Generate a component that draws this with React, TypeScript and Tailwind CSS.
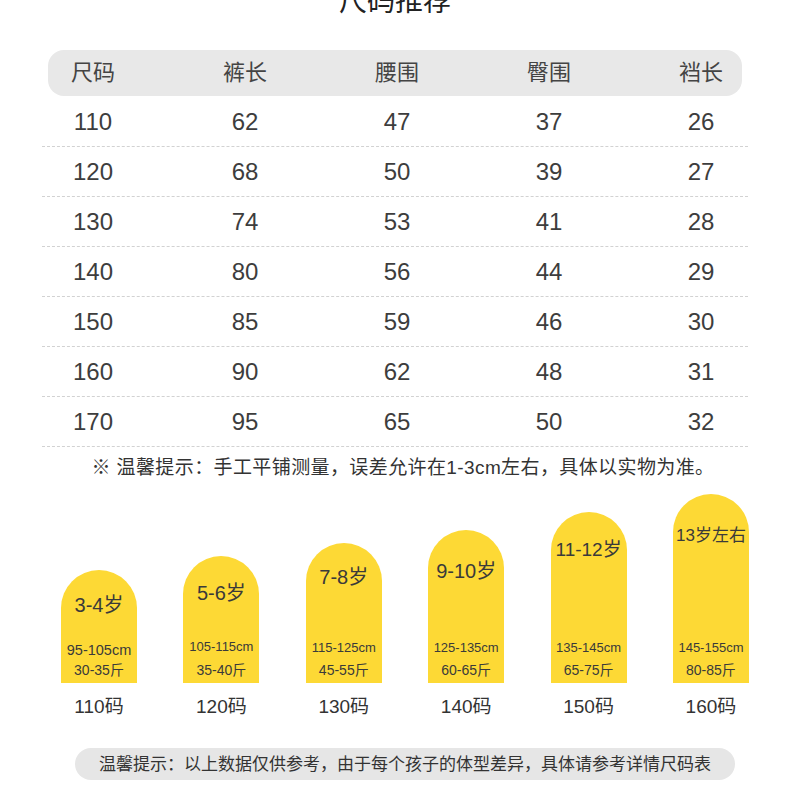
const FONT = "font-['Liberation_Sans','Noto_Sans_CJK_SC',sans-serif]";

const headers = ['尺码', '裤长', '腰围', '臀围', '裆长'];

const rows = [
  ['110', '62', '47', '37', '26'],
  ['120', '68', '50', '39', '27'],
  ['130', '74', '53', '41', '28'],
  ['140', '80', '56', '44', '29'],
  ['150', '85', '59', '46', '30'],
  ['160', '90', '62', '48', '31'],
  ['170', '95', '65', '50', '32'],
];

const cards = [
  { age: '3-4岁', cm: '95-105cm', jin: '30-35斤', size: '110码', box: 'h-[120px]', top: 'pt-[23px]', ageText: 'text-[20px]', cmText: 'text-[14.5px] leading-[18px]' },
  { age: '5-6岁', cm: '105-115cm', jin: '35-40斤', size: '120码', box: 'h-[134px]', top: 'pt-[25px]', ageText: 'text-[20px]', cmText: 'text-[13px] leading-[22px] mb-[1px]' },
  { age: '7-8岁', cm: '115-125cm', jin: '45-55斤', size: '130码', box: 'h-[147px]', top: 'pt-[22px]', ageText: 'text-[20px]', cmText: 'text-[13px] leading-[22px]' },
  { age: '9-10岁', cm: '125-135cm', jin: '60-65斤', size: '140码', box: 'h-[160px]', top: 'pt-[29px]', ageText: 'text-[20px]', cmText: 'text-[13px] leading-[22px]' },
  { age: '11-12岁', cm: '135-145cm', jin: '65-75斤', size: '150码', box: 'h-[178px]', top: 'pt-[26px]', ageText: 'text-[19px]', cmText: 'text-[13px] leading-[22px]' },
  { age: '13岁左右', cm: '145-155cm', jin: '80-85斤', size: '160码', box: 'h-[196px]', top: 'pt-[30px]', ageText: 'text-[17px]', cmText: 'text-[13px] leading-[22px]' },
];

export default function App() {
  return (
    <div className={`w-[790px] h-[790px] overflow-hidden bg-white ${FONT} text-[#3d3d3d]`}>
      <h1 className="mt-[-12px] text-center text-[28px] leading-[28px] text-[#222]">尺码推荐</h1>

      {/* header bar */}
      <div className="mt-[34px] mx-[48px] h-[46px] rounded-[16px] bg-[#e8e8e8] overflow-hidden">
        <div className="ml-[-31px] grid grid-cols-[repeat(5,152px)] h-full items-center">
          {headers.map(h => (
            <div key={h} className="text-center text-[22px] leading-none text-[#444]">{h}</div>
          ))}
        </div>
      </div>

      {/* rows */}
      <div className="mt-[1px]">
        {rows.map(r => (
          <div key={r[0]} className="mx-[42px] h-[50px] border-b border-dashed border-[#d2d2d2]">
            <div className="ml-[-25px] grid grid-cols-[repeat(5,152px)] h-full items-center">
              {r.map((v, i) => (
                <div key={i} className="text-center text-[24px] leading-none">{v}</div>
              ))}
            </div>
          </div>
        ))}
      </div>

      <p className="mt-[9px] text-center text-[19px] leading-[24px] tracking-[0.4px] text-[#333] pl-[16px]">
        ※ 温馨提示：手工平铺测量，误差允许在1-3cm左右，具体以实物为准。
      </p>

      {/* cards */}
      <div className="mt-[14px] h-[189px] overflow-hidden">
        <div className="ml-[61px] grid grid-cols-[repeat(6,76px)] gap-x-[46.4px] h-full items-end">
          {cards.map(c => (
            <div key={c.size} className={`${c.box} rounded-t-[38px] bg-[#fdd935] flex flex-col items-center ${c.top} pb-[9px]`}>
              <div className={`${c.ageText} leading-[24px] whitespace-nowrap text-[#3a3a3a]`}>{c.age}</div>
              <div className="mt-auto flex flex-col items-center">
                <div className={`${c.cmText} whitespace-nowrap text-[#3a3a3a]`}>{c.cm}</div>
                <div className="text-[14px] leading-[22px] whitespace-nowrap text-[#3a3a3a]">{c.jin}</div>
              </div>
            </div>
          ))}
        </div>
      </div>

      <div className="mt-[12px] ml-[61px] grid grid-cols-[repeat(6,76px)] gap-x-[46.4px]">
        {cards.map(c => (
          <div key={c.size} className="text-center text-[19px] leading-[24px] whitespace-nowrap text-[#333]">{c.size}</div>
        ))}
      </div>

      <div className="mt-[29px] mx-[75px] w-[660px] h-[32px] rounded-full bg-[#e6e6e6] flex items-center justify-center">
        <span className="text-[17px] leading-none text-[#333]">
          温馨提示：以上数据仅供参考，由于每个孩子的体型差异，具体请参考详情尺码表
        </span>
      </div>
    </div>
  );
}
